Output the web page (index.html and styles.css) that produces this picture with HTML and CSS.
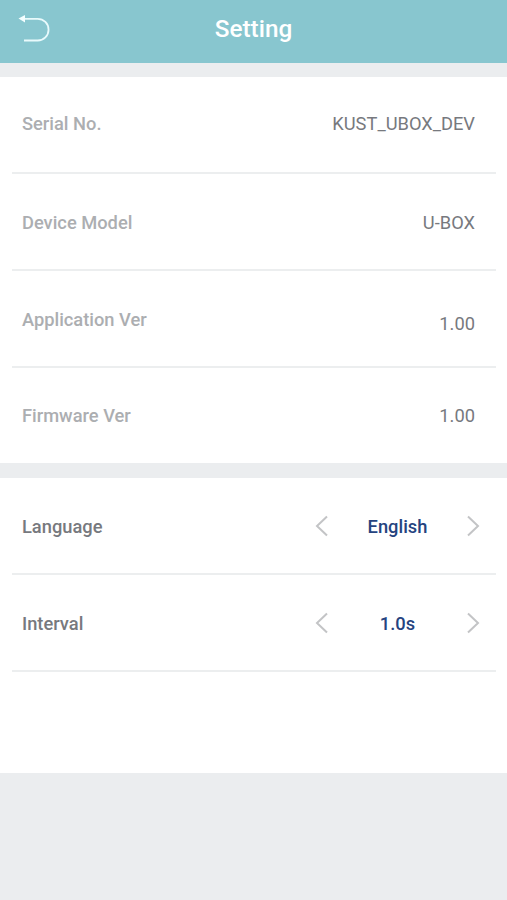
FILE: index.html
```html
<!DOCTYPE html>
<html lang="en">
<head>
<meta charset="utf-8">
<title>Setting</title>
<link rel="stylesheet" href="styles.css">
</head>
<body>
<header class="bar">
  <svg class="back" width="34" height="30" viewBox="0 0 34 30"><path class="stroke" d="M5 4.800H20.700A10.850 10.850 0 0 1 20.700 26.500H7"/><path class="head" d="M1.500 4.600L8 1V8.500Z"/></svg>
  <h1>Setting</h1>
</header>
<main>
  <section class="group info">
    <div class="row serial"><span class="label">Serial No.</span><span class="value">KUST_UBOX_DEV</span></div>
    <div class="row model"><span class="label">Device Model</span><span class="value">U-BOX</span></div>
    <div class="row app"><span class="label">Application Ver</span><span class="value">1.00</span></div>
    <div class="row firmware"><span class="label">Firmware Ver</span><span class="value">1.00</span></div>
  </section>
  <section class="group options">
    <div class="row"><span class="label">Language</span><div class="picker">
      <svg width="14" height="22" viewBox="0 0 14 22"><path d="M12 1.500L2 11L12 20.500"/></svg><span>English</span><svg width="14" height="22" viewBox="0 0 14 22"><path d="M2 1.500L12 11L2 20.500"/></svg></div></div>
    <div class="row"><span class="label">Interval</span><div class="picker">
      <svg width="14" height="22" viewBox="0 0 14 22"><path d="M12 1.500L2 11L12 20.500"/></svg><span>1.0s</span><svg width="14" height="22" viewBox="0 0 14 22"><path d="M2 1.500L12 11L2 20.500"/></svg></div></div>
  </section>
</main>
</body>
</html>
```
FILE: styles.css
```css
* { box-sizing: border-box; }
body { margin: 0; min-height: 900px; background: #ebedef; font-family: Roboto, sans-serif; font-size: 18.3px; color: #77797e; }
.bar { height: 63px; background: #88c6cf; display: grid; grid-template-columns: 70px 1fr 70px; align-items: center; padding-bottom: 6px; }
.bar h1 { margin: 0; text-align: center; color: #fff; font-size: 24.3px; font-weight: 500; line-height: 28px; }
.back { margin-left: 17px; fill: none; }
.stroke { stroke: #e9fafc; stroke-width: 1.8; }
.head { fill: #f4feff; }
.group { background: #fff; padding: 0 11px 0 12px; }
.info { margin-top: 14px; height: 386px; }
.options { margin-top: 15px; height: 295px; }
.row { height: 97px; border-bottom: 2px solid #eceeef; display: flex; align-items: center; justify-content: space-between; padding: 0 21px 0 10px; line-height: 22px; }
.serial { padding-bottom: 2px; }
.model { padding-top: 2px; }
.app { padding-top: 3px; }
.app .value { padding-top: 7px; }
.info .firmware { border-bottom: 0; padding-bottom: 1px; }
.label { font-weight: 500; }
.info .label { color: #acaeb1; }
.options .row { padding-right: 16px; padding-top: 1px; }
.options span { padding-top: 2px; }
.picker { display: grid; grid-template-columns: 14px 1fr 14px; align-items: center; width: 165px; text-align: center; color: #25437f; font-weight: 500; }
.picker svg { fill: none; stroke: #c3c4c6; stroke-width: 2; }
```
